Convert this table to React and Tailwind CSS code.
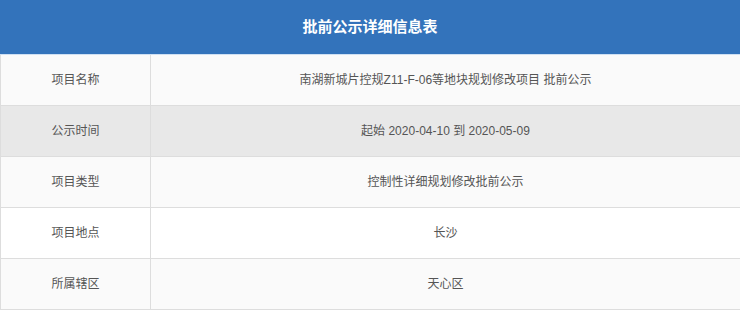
const rows = [
  { label: '项目名称', value: '南湖新城片控规Z11-F-06等地块规划修改项目 批前公示', bg: 'bg-[#fafafa]' },
  { label: '公示时间', value: '起始 2020-04-10 到 2020-05-09', bg: 'bg-[#e8e8e8]' },
  { label: '项目类型', value: '控制性详细规划修改批前公示', bg: 'bg-[#fafafa]' },
  { label: '项目地点', value: '长沙', bg: 'bg-white' },
  { label: '所属辖区', value: '天心区', bg: 'bg-[#fafafa]' },
];

export default function App() {
  return (
    <div
      className="w-[740px] h-[310px] overflow-hidden bg-white"
      style={{ fontFamily: '"Liberation Sans", "Noto Sans CJK SC", sans-serif' }}
    >
      <div className="flex h-[55px] items-center justify-center border-b border-[#cfe0f3] bg-[#3373bb]">
        <h1 className="text-[15px] font-bold text-white">批前公示详细信息表</h1>
      </div>
      {rows.map((row) => (
        <div key={row.label} className={`flex h-[51px] border-b border-l border-[#dddddd] ${row.bg}`}>
          <div className="flex w-[150px] items-center justify-center border-r border-[#dddddd] text-[12px] text-[#555]">
            {row.label}
          </div>
          <div className="flex flex-1 items-center justify-center text-[12px] text-[#555]">{row.value}</div>
        </div>
      ))}
    </div>
  );
}
